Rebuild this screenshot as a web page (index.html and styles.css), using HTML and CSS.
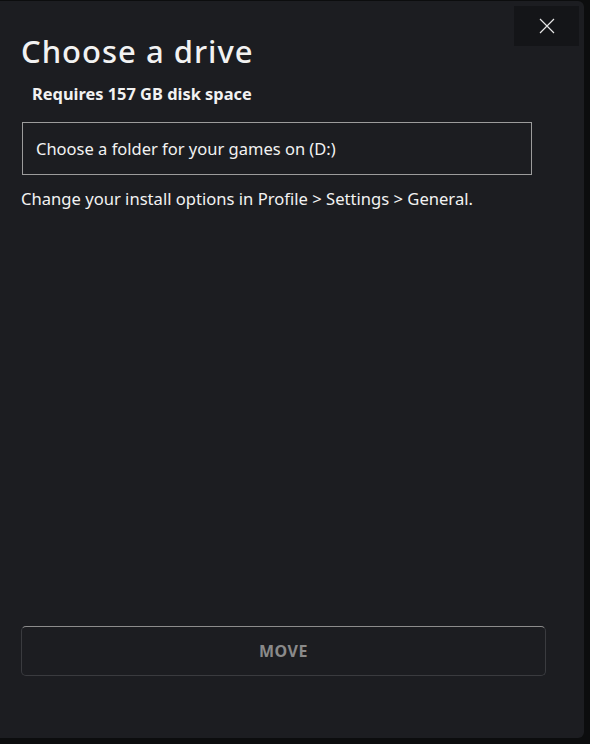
FILE: index.html
```html
<!DOCTYPE html>
<html>
<head>
  <meta charset="UTF-8" />
  <title>Choose a drive</title>
  <link rel="stylesheet" href="styles.css">
</head>
<body>
  <div class="dialog">
    <div class="dialog-top">
      <h1>Choose a drive</h1>
      <button class="close" type="button" aria-label="Close">
        <svg width="16" height="16" viewBox="0 0 16 16">
          <path d="M1 1 L15 15 M15 1 L1 15" stroke="#e6e6e6" stroke-width="1.2" fill="none" />
        </svg>
      </button>
    </div>

    <div class="space">Requires 157 GB disk space</div>

    <div class="folder">Choose a folder for your games on (D:)</div>

    <p class="hint">Change your install options in Profile &gt; Settings &gt; General.</p>

    <div class="fill"></div>

    <button class="move" type="button">MOVE</button>
  </div>
</body>
</html>
```

FILE: styles.css
```css
body {
  margin: 0;
  background: #0c0d0e;
  font-family: "Noto Sans", "Open Sans", sans-serif;
  color: #f2f2f2;
}

.dialog {
  width: 584px;
  height: 737px;
  margin-top: 1px;
  background: #1c1d21;
  border-radius: 0 6px 6px 0;
  display: flex;
  flex-direction: column;
  box-sizing: border-box;
  padding: 0 0 62px 21px;
}

.dialog-top {
  display: flex;
  justify-content: space-between;
  align-items: flex-start;
}

h1 {
  margin: 30px 0 0 0;
  font-size: 31px;
  font-weight: 500;
  letter-spacing: 1px;
  line-height: 40px;
}

.close {
  margin: 5px 5px 0 0;
  width: 65px;
  height: 40px;
  background: #141518;
  border: none;
  display: flex;
  align-items: center;
  justify-content: center;
  cursor: pointer;
}

.space {
  margin: 11px 0 0 11px;
  font-size: 16.4px;
  font-weight: 700;
  line-height: 24px;
}

.folder {
  margin: 16px 0 0 1px;
  width: 510px;
  height: 53px;
  box-sizing: border-box;
  border: 1px solid #9c9c9c;
  padding: 0 13px;
  display: flex;
  align-items: center;
  font-size: 16.5px;
}

.hint {
  margin: 12px 0 0;
  font-size: 16.6px;
  line-height: 24px;
}

.fill {
  flex: 1;
}

.move {
  width: 525px;
  height: 50px;
  background: transparent;
  border: 1px solid #3a3b3f;
  border-top-color: #8c8c8c;
  border-radius: 5px;
  color: #8a8a8a;
  font-family: "Noto Sans", sans-serif;
  font-size: 16px;
  font-weight: 700;
  letter-spacing: 0.5px;
  cursor: pointer;
}
```
